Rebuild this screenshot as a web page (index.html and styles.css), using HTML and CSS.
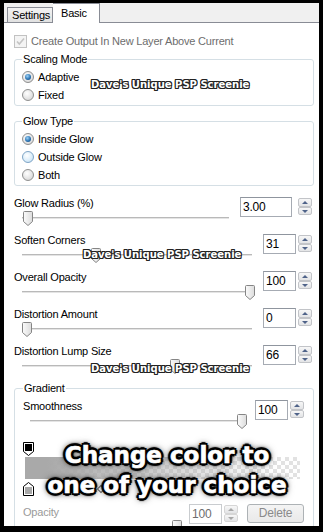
FILE: index.html
```
<!DOCTYPE html>
<html lang="en">
<head>
    <meta charset="UTF-8">
    <title>Glow - Basic</title>
    <link rel="stylesheet" href="styles.css">
</head>
<body>
    <div class="window">
        <!-- Tab strip -->
        <div class="tabs">
            <div class="tab">Settings</div>
            <div class="tab active">Basic</div>
        </div>

        <div class="page">
            <div class="check disabled">
                <svg class="box" width="13" height="13" viewBox="0 0 13 13">
                    <rect x="0.5" y="0.5" width="12" height="12" fill="#f4f4f4" stroke="#c2c2c2"/>
                    <path d="M3 6.5 L5.3 9 L10 3.5" fill="none" stroke="#c4c4c4" stroke-width="1.6"/>
                </svg>
                Create Output In New Layer Above Current
            </div>

            <!-- Scaling mode -->
            <fieldset class="group">
                <legend>Scaling Mode</legend>
                <div class="radio on"><span class="dot"></span>Adaptive</div>
                <div class="radio"><span class="dot"></span>Fixed</div>
            </fieldset>

            <!-- Glow type -->
            <fieldset class="group glow-type">
                <legend>Glow Type</legend>
                <div class="radio on"><span class="dot"></span>Inside Glow</div>
                <div class="radio hot"><span class="dot"></span>Outside Glow</div>
                <div class="radio"><span class="dot"></span>Both</div>
            </fieldset>

            <!-- Parameters -->
            <div class="param first">
                <div class="param-main">
                    <div class="param-label">Glow Radius (%)</div>
                    <div class="slider"><span class="thumb" style="left:1px"></span></div>
                </div>
                <div class="spin-field wide">
                    <div class="num">3.00</div>
                    <div class="spin"><span class="up"></span><span class="down"></span></div>
                </div>
            </div>

            <div class="param">
                <div class="param-main">
                    <div class="param-label">Soften Corners</div>
                    <div class="slider"><span class="thumb" style="left:69px"></span></div>
                </div>
                <div class="spin-field">
                    <div class="num">31</div>
                    <div class="spin"><span class="up"></span><span class="down"></span></div>
                </div>
            </div>

            <div class="param">
                <div class="param-main">
                    <div class="param-label">Overall Opacity</div>
                    <div class="slider"><span class="thumb" style="left:223px"></span></div>
                </div>
                <div class="spin-field">
                    <div class="num">100</div>
                    <div class="spin"><span class="up"></span><span class="down"></span></div>
                </div>
            </div>

            <div class="param">
                <div class="param-main">
                    <div class="param-label">Distortion Amount</div>
                    <div class="slider"><span class="thumb" style="left:0px"></span></div>
                </div>
                <div class="spin-field">
                    <div class="num">0</div>
                    <div class="spin"><span class="up"></span><span class="down"></span></div>
                </div>
            </div>

            <div class="param">
                <div class="param-main">
                    <div class="param-label">Distortion Lump Size</div>
                    <div class="slider"><span class="thumb" style="left:148px"></span></div>
                </div>
                <div class="spin-field">
                    <div class="num">66</div>
                    <div class="spin"><span class="up"></span><span class="down"></span></div>
                </div>
            </div>

            <!-- Gradient -->
            <fieldset class="group gradient">
                <legend>Gradient</legend>
                <div class="param inner">
                    <div class="param-main">
                        <div class="param-label">Smoothness</div>
                        <div class="slider"><span class="thumb" style="left:207px"></span></div>
                    </div>
                    <div class="spin-field">
                        <div class="num">100</div>
                        <div class="spin"><span class="up"></span><span class="down"></span></div>
                    </div>
                </div>

                <div class="editor">
                    <svg class="marker" width="11" height="14" viewBox="0 0 11 14">
                        <path d="M0.5 0.5 H10.5 V9.5 L5.5 13.5 L0.5 9.5 Z" fill="#fff" stroke="#000"/>
                        <rect x="2" y="2" width="7" height="7" fill="#000"/>
                    </svg>
                    <div class="grad-bar"></div>
                    <div class="stops-bottom">
                        <svg class="marker" width="11" height="14" viewBox="0 0 11 14">
                            <path d="M0.5 13.5 H10.5 V4.5 L5.5 0.5 L0.5 4.5 Z" fill="#fff" stroke="#000"/>
                            <rect x="2" y="5" width="7" height="7" fill="#a8a8a8"/>
                        </svg>
                        <span class="mid"></span>
                    </div>
                </div>

                <div class="param inner opacity">
                    <div class="param-main">
                        <div class="param-label">Opacity</div>
                        <div class="slider"><span class="thumb" style="left:142px"></span></div>
                    </div>
                    <div class="spin-field">
                        <div class="num">100</div>
                        <div class="spin"><span class="up"></span><span class="down"></span></div>
                    </div>
                    <div class="btn">Delete</div>
                </div>
            </fieldset>
        </div>

        <!-- Overlays -->
        <div class="mark m1">Dave's Unique PSP Screenie</div>
        <div class="mark m2">Dave's Unique PSP Screenie</div>
        <div class="mark m3">Dave's Unique PSP Screenie</div>
        <div class="caption">Change color to<br>one of your choice</div>
    </div>
</body>
</html>
```
FILE: styles.css
```
body {
    margin: 0;
    background: #000;
    height: 532px;
    overflow: hidden;
    font-family: "Liberation Sans", Arial, sans-serif;
    font-size: 11px;
    letter-spacing: -0.2px;
    color: #000;
}
.window {
    position: relative;
    margin: 3px 0 0 4px;
    width: 315px;
    height: 523px;
    overflow: hidden;
    background: #fff;
}

/* tabs */
.tabs {
    display: flex;
    align-items: flex-end;
    height: 19px;
    padding-left: 3px;
    background: #f0f0f0;
    border-bottom: 1px solid #898c95;
}
.tab {
    box-sizing: border-box;
    height: 15px;
    width: 46px;
    padding: 1px 0 0 4px;
    line-height: 13px;
    border: 1px solid #898c95;
    border-bottom: none;
    background: linear-gradient(#f3f3f3, #e1e1e1);
}
.tab.active {
    height: 20px;
    width: 47px;
    margin-bottom: -1px;
    padding: 2px 0 0 8px;
    line-height: 14px;
    background: #fff;
    border-left: none;
}

.page {
    padding: 11px 5px 0 10px;
}

.check {
    display: flex;
    align-items: center;
    gap: 4px;
    height: 14px;
    line-height: 14px;
}
.check.disabled {
    color: #6d6d6d;
}

/* group boxes */
.group {
    margin: 4px 0 0;
    padding: 2px 8px 1px 7px;
    border: 1px solid #d5dfe5;
    border-radius: 3px;
    min-inline-size: 0;
}
.group legend {
    padding: 0 1px;
    line-height: 14px;
}
.group.glow-type {
    margin-top: 8px;
}
.radio {
    display: flex;
    align-items: center;
    gap: 4px;
    height: 18px;
}
.dot {
    position: relative;
    box-sizing: border-box;
    width: 12px;
    height: 12px;
    border-radius: 50%;
    border: 1px solid #8e8f8f;
    background: radial-gradient(circle at 40% 35%, #fff, #e2e2e2 60%, #cfcfcf);
}
.radio.hot .dot {
    border-color: #7fa5c6;
    background: radial-gradient(circle at 40% 35%, #fff, #d9ecf9 60%, #b8d6ee);
}
.radio.on .dot::after {
    content: "";
    position: absolute;
    left: 2px;
    top: 2px;
    width: 6px;
    height: 6px;
    border-radius: 50%;
    background: radial-gradient(circle at 40% 35%, #9fd3f7, #2d76b5 55%, #0f3e6d);
}

/* parameter rows */
.param {
    display: flex;
    align-items: flex-start;
    height: 37px;
    padding-right: 2px;
}
.param.first {
    margin-top: 10px;
}
.param-main {
    flex: 1;
    margin-right: 11px;
}
.param-label {
    line-height: 14px;
    height: 14px;
}
.slider {
    position: relative;
    height: 17px;
    margin-left: 8px;
}
.slider::before {
    content: "";
    position: absolute;
    left: 0;
    right: 0;
    top: 7px;
    height: 1px;
    background: #b9b9b9;
    border-bottom: 1px solid #e4e4e4;
}
.thumb {
    position: absolute;
    top: 1px;
    width: 10px;
    height: 15px;
    background: url("data:image/svg+xml,%3Csvg xmlns='http://www.w3.org/2000/svg' width='10' height='15'%3E%3ClinearGradient id='g' x1='0' x2='1'%3E%3Cstop offset='0' stop-color='%23fbfbfb'/%3E%3Cstop offset='1' stop-color='%23dcdcdc'/%3E%3C/linearGradient%3E%3Cpath d='M0.5 1.5 Q0.5 0.5 1.5 0.5 H8.5 Q9.5 0.5 9.5 1.5 V10.5 L5 14.5 L0.5 10.5 Z' fill='url(%23g)' stroke='%23858585'/%3E%3C/svg%3E") no-repeat;
}

.spin-field {
    display: flex;
    gap: 2px;
    margin-top: 1px;
}
.spin-field.wide {
    gap: 6px;
}
.num {
    box-sizing: border-box;
    width: 33px;
    height: 20px;
    padding: 0 2px;
    line-height: 18px;
    font-size: 12px;
    border: 1px solid #a6abb3;
    border-top-color: #8f959e;
}
.spin-field.wide .num {
    width: 52px;
}
.spin {
    display: flex;
    flex-direction: column;
    width: 14px;
    height: 17px;
    margin-top: 1px;
}
.spin span {
    position: relative;
    flex: 1;
    border: 1px solid #c2c4c8;
    border-radius: 2px;
    background: linear-gradient(#f7f7f7, #e3e4e6);
}
.spin span::after {
    content: "";
    position: absolute;
    left: 3px;
    top: 2px;
    border-left: 3px solid transparent;
    border-right: 3px solid transparent;
}
.spin .up::after {
    border-bottom: 3px solid #4f6389;
}
.spin .down::after {
    border-top: 3px solid #4f6389;
}

/* gradient group */
.group.gradient {
    margin-top: 0;
    padding: 4px 9px 0 8px;
}
.param.inner {
    padding-right: 0;
}
.param.inner .slider {
    margin-left: 7px;
}
.editor {
    margin-top: 6px;
}
.marker {
    display: block;
}
.grad-bar {
    width: 275px;
    height: 22px;
    margin: 1px 0 3px 2px;
    background:
        linear-gradient(to right, #a9a9a9 0%, #a9a9a9 8%, rgba(169, 169, 169, 0) 88%),
        repeating-conic-gradient(#e2e2e2 0 25%, #fff 0 50%) 0 0 / 8px 8px;
}
.stops-bottom {
    display: flex;
    align-items: center;
}
.mid {
    width: 4px;
    height: 4px;
    margin-left: 64px;
    border: 1px solid #6a6a6a;
    background: #fff;
    transform: rotate(45deg);
}
.param.opacity {
    margin-top: 9px;
    color: #9a9a9a;
}
.opacity .spin-field {
    margin-top: -1px;
}
.opacity .num {
    color: #6d6d6d;
    border-color: #c9cccf;
}
.opacity .spin span {
    border-color: #d6d6d6;
}
.opacity .spin .up::after {
    border-bottom-color: #a7a7a7;
}
.opacity .spin .down::after {
    border-top-color: #a7a7a7;
}
.btn {
    box-sizing: border-box;
    width: 57px;
    height: 19px;
    margin: -1px 0 0 9px;
    line-height: 17px;
    text-align: center;
    font-size: 12px;
    color: #8a8a8a;
    border: 1px solid #adb2b5;
    border-radius: 3px;
    background: linear-gradient(#f4f4f4, #e9e9e9);
}

/* watermarks */
.mark {
    position: absolute;
    font-family: "DejaVu Sans", sans-serif;
    font-weight: bold;
    font-size: 10px;
    line-height: 10px;
    letter-spacing: 0;
    color: #fff;
    text-shadow: 1px 0 0 #222, -1px 0 0 #222, 0 1px 0 #222, 0 -1px 0 #222,
        1px 1px 0 #222, -1px -1px 0 #222, 1px -1px 0 #222, -1px 1px 0 #222;
    white-space: nowrap;
}
.m1 { left: 87px; top: 77px; }
.m2 { left: 79px; top: 247px; }
.m3 { left: 87px; top: 361px; }

.caption {
    position: absolute;
    left: 20px;
    width: 286px;
    top: 437px;
    text-align: center;
    font-family: "DejaVu Sans", sans-serif;
    font-weight: bold;
    font-size: 23px;
    line-height: 30px;
    letter-spacing: 0;
    color: #fff;
    -webkit-text-stroke: 0.7px #fff;
    text-shadow: 2px 0 0 #000, -2px 0 0 #000, 0 2px 0 #000, 0 -2px 0 #000,
        2px 2px 0 #000, -2px -2px 0 #000, 2px -2px 0 #000, -2px 2px 0 #000,
        3px 0 1px #000, -3px 0 1px #000, 0 3px 1px #000, 0 -3px 1px #000,
        0 0 6px #000, 0 0 8px rgba(0, 0, 0, 0.7);
}
```
